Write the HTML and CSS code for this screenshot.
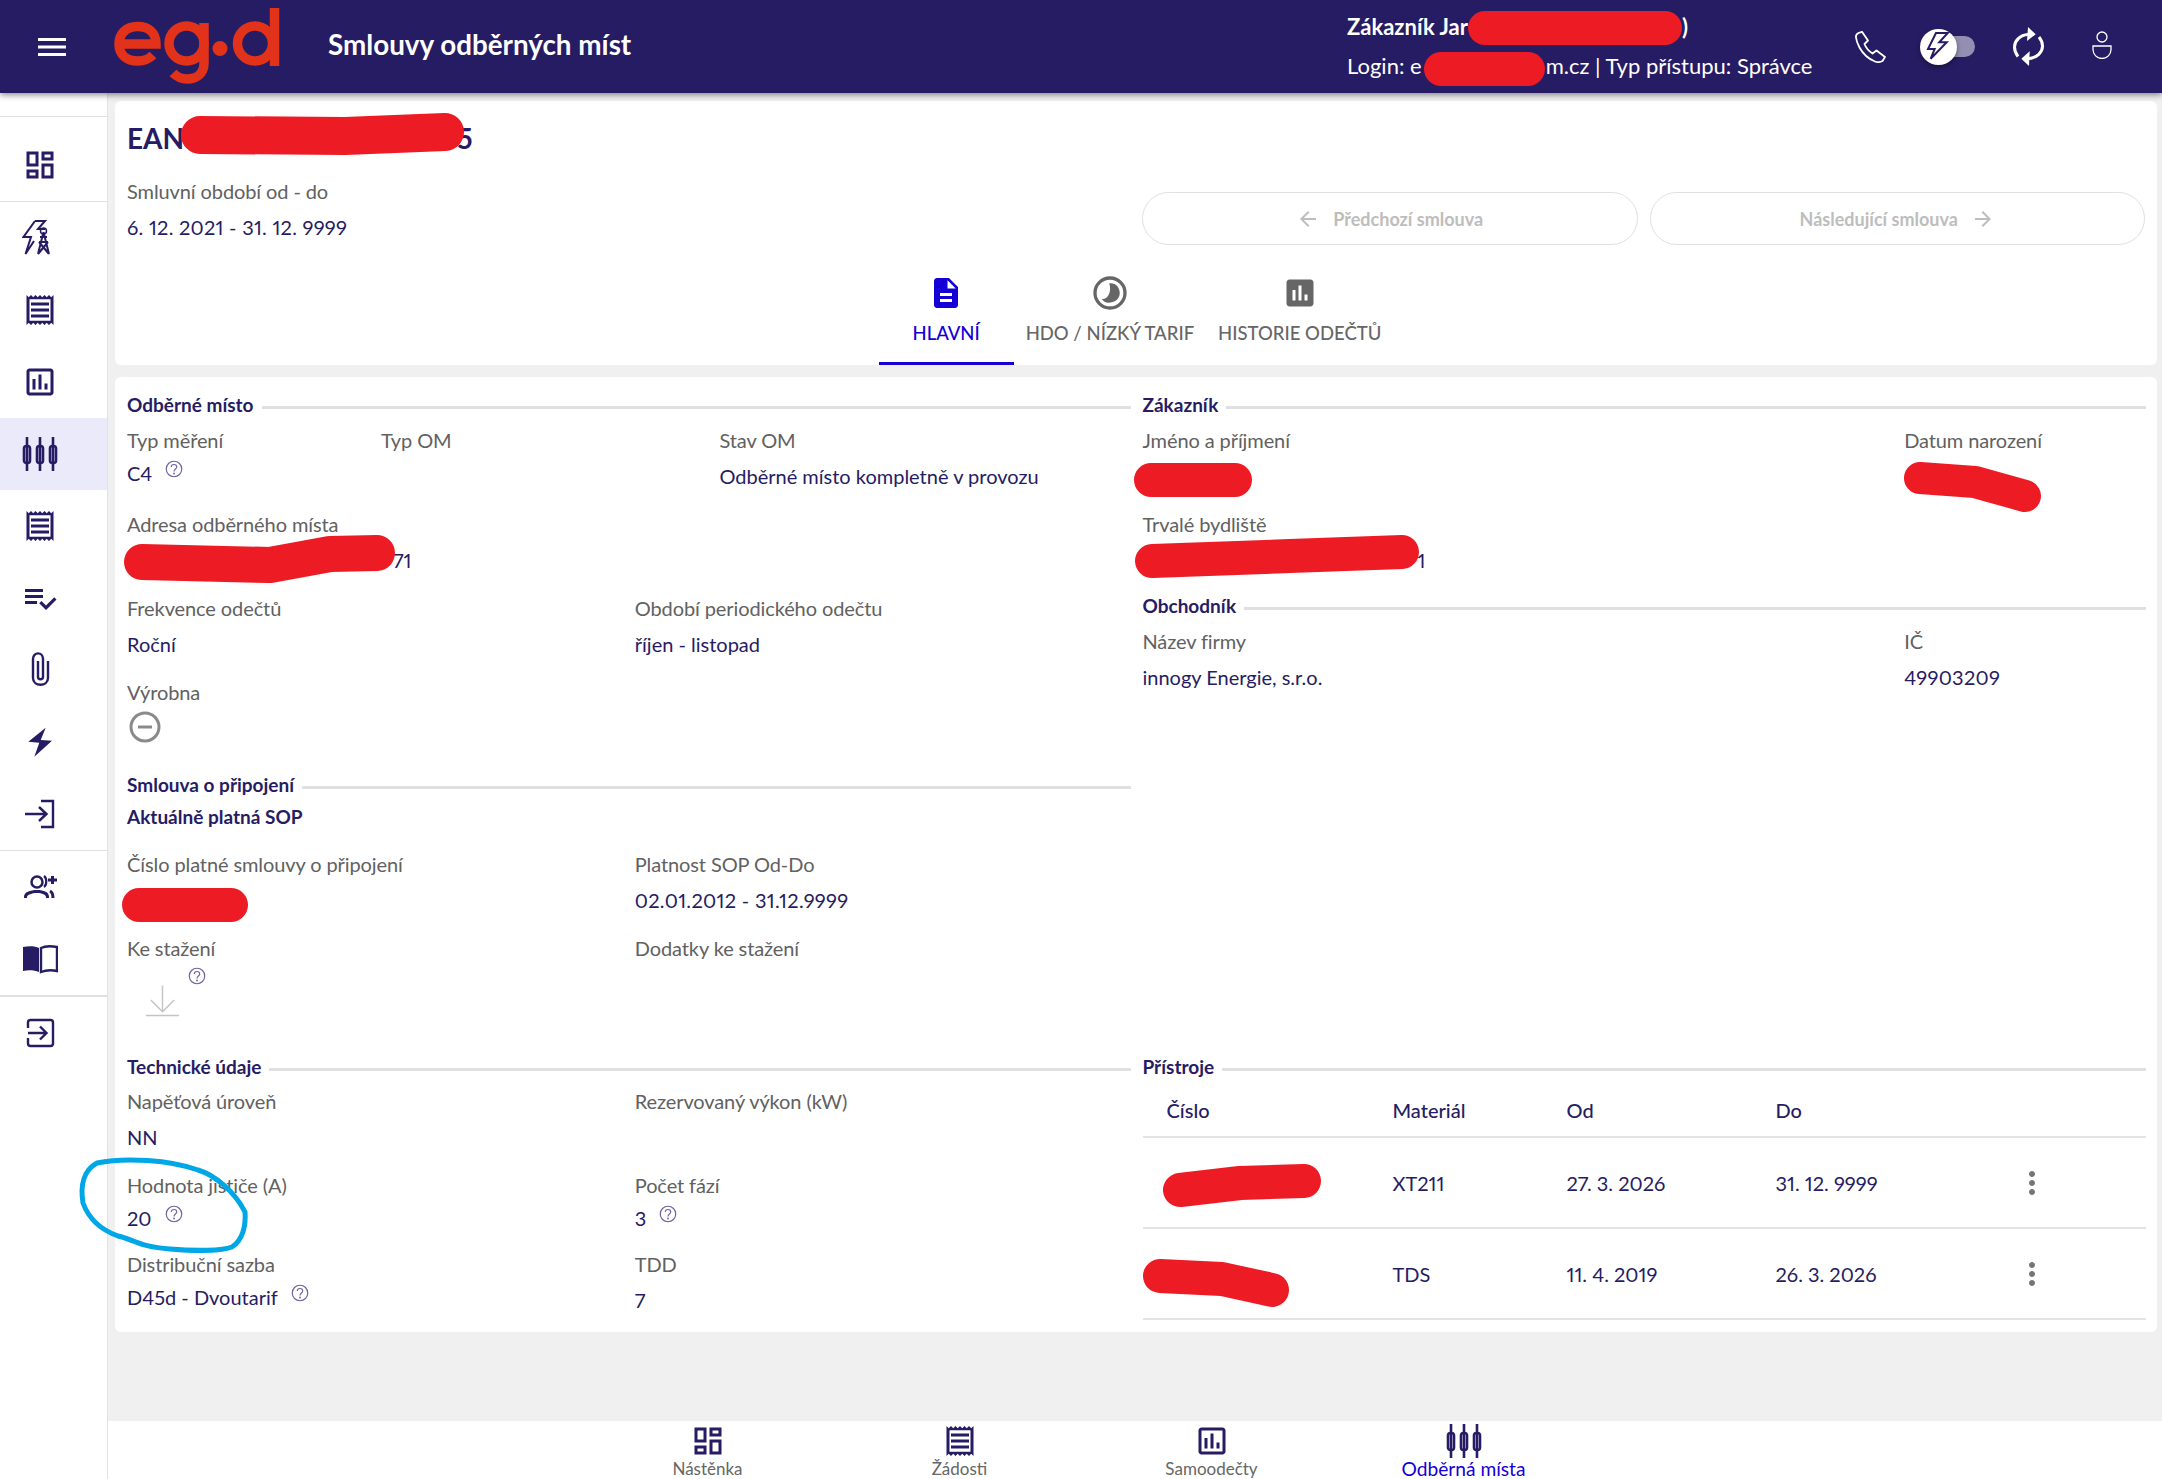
FILE: index.html
```html
<!DOCTYPE html>
<html lang="cs">
<head>
<meta charset="utf-8">
<title>Smlouvy odběrných míst</title>
<link rel="stylesheet" href="styles.css">
</head>
<body>
<svg class="defs" aria-hidden="true">
  <symbol id="i-dash" viewBox="0 0 24 24"><path d="M19 5v2h-4V5h4M9 5v6H5V5h4m10 8v6h-4v-6h4M9 17v2H5v-2h4M21 3h-8v6h8V3zM11 3H3v10h8V3zm10 8h-8v10h8V11zm-10 4H3v6h8v-6z"/></symbol>
  <symbol id="i-receipt" viewBox="0 0 24 24"><path d="M19.5 3.5L18 2l-1.5 1.5L15 2l-1.5 1.5L12 2l-1.5 1.5L9 2 7.5 3.5 6 2 4.5 3.5 3 2v20l1.5-1.5L6 22l1.5-1.5L9 22l1.5-1.5L12 22l1.5-1.5L15 22l1.5-1.5L18 22l1.5-1.5L21 22V2l-1.5 1.5zM19 19.09H5V4.91h14v14.18zM6 15h12v2H6zm0-4h12v2H6zm0-4h12v2H6z"/></symbol>
  <symbol id="i-chart" viewBox="0 0 24 24"><path d="M19 3H5c-1.1 0-2 .9-2 2v14c0 1.1.9 2 2 2h14c1.1 0 2-.9 2-2V5c0-1.1-.9-2-2-2zm0 16H5V5h14v14zM7 10h2v7H7zm4-3h2v10h-2zm4 6h2v4h-2z"/></symbol>
  <symbol id="i-meters" viewBox="0 0 36 36"><g fill="none" stroke="currentColor" stroke-width="2.6"><path d="M5 1v34M18 1v34M31 1v34"/><rect x="2" y="10" width="6" height="17" rx="2.500"/><rect x="15" y="10" width="6" height="17" rx="2.500"/><rect x="28" y="10" width="6" height="17" rx="2.500"/></g></symbol>
  <symbol id="i-help" viewBox="0 0 20 20"><g fill="none" stroke="currentColor" stroke-width="1.3"><circle cx="10" cy="10" r="8.6"/><path d="M7 7.8C7 6 8.4 5 10 5s3 1 3 2.7c0 2.3-3 2.3-3 5"/></g><circle cx="10" cy="15" r="1" fill="currentColor"/></symbol>
  <symbol id="i-kebab" viewBox="0 0 24 24"><path d="M12 8c1.1 0 2-.9 2-2s-.9-2-2-2-2 .9-2 2 .9 2 2 2zm0 2c-1.1 0-2 .9-2 2s.9 2 2 2 2-.9 2-2-.9-2-2-2zm0 6c-1.1 0-2 .9-2 2s.9 2 2 2 2-.9 2-2-.9-2-2-2z"/></symbol>
</svg>

<div class="app">
  <header class="topbar">
    <svg class="burger" viewBox="0 0 28 18"><path d="M0 1.5h28M0 9h28M0 16.5h28"/></svg>
    <svg class="logo" viewBox="0 0 166 76" role="img" aria-label="eg.d">
      <g fill="none" stroke="#e2321a" stroke-width="9.5">
        <path d="M5 36H42C42 24 34 18.500 23.500 18.500C12 18.500 5 26 5 36C5 47 13 53 24 53C30 53 35 51 39 47"/>
        <circle cx="72.500" cy="35.500" r="17.500"/>
        <path d="M90 15V55C90 66 82 71 73 71C67 71 63 69 59 65"/>
        <circle cx="141" cy="35.500" r="17.500"/>
        <path d="M160.500 0V58"/>
      </g>
      <circle cx="106" cy="40.500" r="7.500" fill="#e2321a"/>
    </svg>
    <h1 class="page-title">Smlouvy odběrných míst</h1>
    <div class="user-info">
      <div class="user-name">Zákazník Jar<span class="gap gap-name"></span>)</div>
      <div class="user-login">Login: e<span class="gap gap-login"></span>m.cz | Typ přístupu: Správce</div>
    </div>
    <div class="top-icons">
      <svg class="top-phone" viewBox="0 0 32 32"><path d="M2 6.500Q1.500 3.500 4.500 2L8 .8 14 9.500 10.500 13Q12.500 18.500 18.500 22.500L22.500 19.500 31 26 28.500 30Q25 32 21 30.500Q11 26.500 5.500 16.500Q2.500 11 2 6.500z"/></svg>
      <div class="toggle">
        <span class="toggle-track"></span>
        <span class="toggle-knob"><svg viewBox="0 0 37 36"><path d="M16 4L8 20H14.700L10.700 29.700 26.700 13.300H19.300L27.700 4z"/></svg></span>
      </div>
      <svg class="top-sync" viewBox="0 0 31 39">
        <path class="sync-line" d="M15 7.500C7 8 1.500 14 1.500 20C1.500 24 3 27 5 29.500"/>
        <path d="M15 0L22.700 7.300 14 14z"/>
        <path class="sync-line" d="M16 31.500C24 31 29.500 25 29.500 19C29.500 15.500 28 12.500 26 10"/>
        <path d="M16.700 24.300L8.300 31.700 16 39z"/>
      </svg>
      <svg class="top-user" viewBox="0 0 20 28"><circle cx="10" cy="6" r="5"/><path d="M1 15H19V18.500a9 9 0 0 1-18 0z"/></svg>
    </div>
  </header>

  <div class="body">
    <nav class="sidebar">
      <div class="side-group side-group-first">
        <a class="side-item side-item-dash"><svg class="ico"><use href="#i-dash"/></svg></a>
      </div>
      <div class="side-group">
        <a class="side-item">
          <svg class="ico ico-line ico-tower" viewBox="0 0 36 36"><path d="M13 1H23L16 9h7M13 1L1.500 17H9L3.500 34 12 21"/><path d="M21.500 12L16 34M21.500 12L27 34M17 22H26M16 34L26 22M27 34L17 22M18 17H25"/><circle cx="21.500" cy="11" r="3"/></svg>
        </a>
        <a class="side-item"><svg class="ico"><use href="#i-receipt"/></svg></a>
        <a class="side-item"><svg class="ico"><use href="#i-chart"/></svg></a>
        <a class="side-item side-item-active"><svg class="ico"><use href="#i-meters"/></svg></a>
        <a class="side-item"><svg class="ico"><use href="#i-receipt"/></svg></a>
        <a class="side-item"><svg class="ico" viewBox="0 0 24 24"><path d="M14 10H2v2h12v-2zm0-4H2v2h12V6zM2 16h8v-2H2v2zm19.500-4.500L23 13l-6.990 7-4.510-4.500L13 14l3.010 3 5.490-5.500z"/></svg></a>
        <a class="side-item"><svg class="ico ico-line" viewBox="0 0 36 36"><path d="M26 9V26C26 35 11 35 11 26V7C11 -.5 21 -.5 21 7V25C21 28 16 28 16 25V9"/></svg></a>
        <a class="side-item"><svg class="ico-bolt" viewBox="0 0 24 30"><path d="M17.700.7L.3 14.700 11.300 15.700 6.300 29.700 24 13.700 12.700 13z"/></svg></a>
        <a class="side-item"><svg class="ico ico-line" viewBox="0 0 36 36"><path d="M3 18H24M17 11L24.500 18 17 25M19 5H31V31H19"/></svg></a>
      </div>
      <div class="side-group">
        <a class="side-item"><svg class="ico" viewBox="0 0 36 36"><circle cx="15" cy="13" r="5.500" fill="none" stroke="currentColor" stroke-width="2.500"/><path d="M2 29v-1c0-5 6-7 13-7s12 2 12 7v1h-3v-1c0-2-4-4-9-4s-10 2-10 4v1z"/><path d="M22 7c3 2 3 9 0 11" fill="none" stroke="currentColor" stroke-width="2.200"/><path d="M28 22c2 1 3 3 3 7" fill="none" stroke="currentColor" stroke-width="3"/><path d="M29 15v-2.500h-3v-3h3V7h3v2.500h3v3h-3V15z"/></svg></a>
        <a class="side-item"><svg class="ico" viewBox="0 0 36 36"><path d="M1 6c6-1 12-1 16 1v24c-5-2-11-2-16-1z"/><path d="M19 7c4-2 10-2 16-1v24c-5-1-11-1-16 1z" fill="none" stroke="currentColor" stroke-width="2.400"/></svg></a>
      </div>
      <div class="side-group side-group-last">
        <a class="side-item"><svg class="ico ico-line" viewBox="0 0 36 36"><path d="M6 13V7.500Q6 5 8.500 5H28.500Q31 5 31 7.500V28.500Q31 31 28.500 31H8.500Q6 31 6 28.500V23M6 18H24M18 11.500L24.500 18 18 24.500"/></svg></a>
      </div>
    </nav>

    <main class="main">
      <section class="card head-card">
        <div class="head-top">
          <div>
            <h2 class="ean">EAN<span class="gap gap-ean"></span>5</h2>
            <div class="label head-label">Smluvní období od - do</div>
            <div class="value head-value">6. 12. 2021 - 31. 12. 9999</div>
          </div>
          <div class="pager">
            <button class="pager-btn"><svg viewBox="0 0 24 24"><path d="M20 11H7.830l5.590-5.590L12 4l-8 8 8 8 1.410-1.410L7.830 13H20v-2z"/></svg>Předchozí smlouva</button>
            <button class="pager-btn">Následující smlouva<svg viewBox="0 0 24 24"><path d="M12 4l-1.410 1.410L16.170 11H4v2h12.170l-5.580 5.590L12 20l8-8z"/></svg></button>
          </div>
        </div>
        <div class="tabs">
          <a class="tab tab-active">
            <svg viewBox="0 0 24 24"><path d="M14 2H6c-1.100 0-1.990.9-1.990 2L4 20c0 1.100.89 2 1.990 2H18c1.100 0 2-.9 2-2V8l-6-6zm2 16H8v-2h8v2zm0-4H8v-2h8v2zm-3-5V3.500L18.500 9H13z"/></svg>
            <span>HLAVNÍ</span>
          </a>
          <a class="tab">
            <svg viewBox="0 0 24 24"><circle cx="12" cy="12" r="10" fill="none" stroke="currentColor" stroke-width="2.200"/><path d="M11.500 5.500C16 5 18.500 8.500 18.500 12C18.500 16 15 18.500 11 18.500C9 18.500 7.500 17.500 6.500 16C10 16.500 13.500 12 11.500 5.500z"/></svg>
            <span>HDO / NÍZKÝ TARIF</span>
          </a>
          <a class="tab">
            <svg viewBox="0 0 24 24"><path d="M19 3H5c-1.100 0-2 .9-2 2v14c0 1.100.9 2 2 2h14c1.100 0 2-.9 2-2V5c0-1.100-.9-2-2-2zM9 17H7v-7h2v7zm4 0h-2V7h2v10zm4 0h-2v-4h2v4z"/></svg>
            <span>HISTORIE ODEČTŮ</span>
          </a>
        </div>
      </section>

      <section class="card detail-card">
        <div class="col col-top">
          <div class="sec-head"><h3>Odběrné místo</h3></div>
          <div class="row row-first">
            <div class="c3"><div class="label">Typ měření</div><div class="value value-tight">C4<svg class="help"><use href="#i-help"/></svg></div></div>
            <div class="c4"><div class="label">Typ OM</div></div>
            <div class="c5"><div class="label">Stav OM</div><div class="value">Odběrné místo kompletně v provozu</div></div>
          </div>
          <div class="row"><div class="c12"><div class="label">Adresa odběrného místa</div><div class="value"><span class="gap gap-addr"></span>71</div></div></div>
          <div class="row">
            <div class="c6"><div class="label">Frekvence odečtů</div><div class="value">Roční</div></div>
            <div class="c6"><div class="label">Období periodického odečtu</div><div class="value">říjen - listopad</div></div>
          </div>
          <div class="row row-92">
            <div class="c12"><div class="label">Výrobna</div>
              <svg class="minus" viewBox="0 0 32 32"><circle cx="16" cy="16" r="14"/><path d="M9 16H23"/></svg>
            </div>
          </div>
          <div class="sec-head"><h3>Smlouva o připojení</h3></div>
          <div class="sop-title">Aktuálně platná SOP</div>
          <div class="row row-sop">
            <div class="c6"><div class="label">Číslo platné smlouvy o připojení</div></div>
            <div class="c6"><div class="label">Platnost SOP Od-Do</div><div class="value value-num">02.01.2012 - 31.12.9999</div></div>
          </div>
          <div class="row row-118">
            <div class="c6"><div class="label">Ke stažení</div>
              <div class="download">
                <svg class="dl-icon" viewBox="0 0 36 32"><path d="M18 0V27M6 15L18 27 30 15M1 31H35"/></svg>
                <svg class="help help-over"><use href="#i-help"/></svg>
              </div>
            </div>
            <div class="c6"><div class="label">Dodatky ke stažení</div></div>
          </div>
        </div>

        <div class="col col-top">
          <div class="sec-head"><h3>Zákazník</h3></div>
          <div class="row row-first">
            <div class="c9"><div class="label">Jméno a příjmení</div></div>
            <div class="c3"><div class="label">Datum narození</div></div>
          </div>
          <div class="row row-81"><div class="c12"><div class="label">Trvalé bydliště</div><div class="value"><span class="gap gap-home"></span>1</div></div></div>
          <div class="sec-head"><h3>Obchodník</h3></div>
          <div class="row row-first">
            <div class="c9"><div class="label">Název firmy</div><div class="value">innogy Energie, s.r.o.</div></div>
            <div class="c3"><div class="label">IČ</div><div class="value value-num">49903209</div></div>
          </div>
        </div>

        <div class="col">
          <div class="sec-head"><h3>Technické údaje</h3></div>
          <div class="row row-tech">
            <div class="c6"><div class="label">Napěťová úroveň</div><div class="value">NN</div></div>
            <div class="c6"><div class="label">Rezervovaný výkon (kW)</div></div>
          </div>
          <div class="row row-79">
            <div class="c6"><div class="label">Hodnota jističe (A)</div><div class="value value-tight">20<svg class="help"><use href="#i-help"/></svg></div></div>
            <div class="c6"><div class="label">Počet fází</div><div class="value value-tight">3<svg class="help"><use href="#i-help"/></svg></div></div>
          </div>
          <div class="row row-79">
            <div class="c6"><div class="label">Distribuční sazba</div><div class="value value-tight">D45d - Dvoutarif<svg class="help"><use href="#i-help"/></svg></div></div>
            <div class="c6"><div class="label">TDD</div><div class="value">7</div></div>
          </div>
        </div>

        <div class="col">
          <div class="sec-head"><h3>Přístroje</h3></div>
          <div class="dev-table">
            <div class="dev-row dev-head"><span>Číslo</span><span>Materiál</span><span>Od</span><span>Do</span><span></span></div>
            <div class="dev-row"><span></span><span>XT211</span><span>27. 3. 2026</span><span>31. 12. 9999</span><svg class="kebab"><use href="#i-kebab"/></svg></div>
            <div class="dev-row"><span></span><span>TDS</span><span>11. 4. 2019</span><span>26. 3. 2026</span><svg class="kebab"><use href="#i-kebab"/></svg></div>
          </div>
        </div>
      </section>

      <nav class="bottom-nav">
        <a class="bn-item"><svg class="ico"><use href="#i-dash"/></svg><span>Nástěnka</span></a>
        <a class="bn-item"><svg class="ico"><use href="#i-receipt"/></svg><span>Žádosti</span></a>
        <a class="bn-item"><svg class="ico"><use href="#i-chart"/></svg><span>Samoodečty</span></a>
        <a class="bn-item bn-active"><svg class="ico"><use href="#i-meters"/></svg><span>Odběrná místa</span></a>
      </nav>
    </main>
  </div>

  <svg class="marks" viewBox="0 0 2162 1479" aria-hidden="true">
    <g class="mark-red">
      <path class="w34" d="M1485 28L1665 28"/>
      <path class="w34" d="M1441 69L1528 69"/>
      <path class="w38" d="M200 135L345 136L445 132"/>
      <path class="w36" d="M142 562L270 565L330 554L377 553"/>
      <path class="w34" d="M139 905H231"/>
      <path class="w34" d="M1151 480H1235"/>
      <path class="w32" d="M1920 478L1975 482L2025 496"/>
      <path class="w34" d="M1152 561L1290 556L1402 552"/>
      <path class="w34" d="M1180 1190L1240 1183L1304 1181"/>
      <path class="w34" d="M1160 1276L1222 1279L1272 1290"/>
    </g>
    <path class="mark-blue" d="M97 1163C84 1170 80 1185 83 1203C90 1222 104 1231 118 1236C135 1240 140 1247 170 1249C195 1251 222 1251 232 1247C243 1240 246 1225 245 1212C235 1192 215 1175 198 1170C170 1160 125 1157 97 1163z"/>
  </svg>
</div>
</body>
</html>
```

FILE: styles.css
```css
* { box-sizing: border-box; }
html, body { margin: 0; padding: 0; }
body {
  font-family: "Lato", "Noto Sans", sans-serif;
  font-size: 20px;
  color: #261c63;
  background: #f0f0f0;
  font-variant-numeric: proportional-nums;
}
h1, h2, h3 { margin: 0; }
.defs { position: absolute; width: 0; height: 0; }

.app {
  position: relative;
  width: 2162px;
  height: 1479px;
  overflow: hidden;
  display: flex;
  flex-direction: column;
}

/* top bar */
.topbar {
  position: relative;
  z-index: 2;
  height: 93px;
  flex: none;
  display: flex;
  align-items: center;
  background: #261c63;
  color: #fff;
  box-shadow: 0 2px 6px rgba(0, 0, 0, .45);
  padding-left: 38px;
}
.burger { width: 28px; height: 18px; fill: none; stroke: #fff; stroke-width: 3; flex: none; }
.logo { width: 166px; height: 76px; margin-left: 48px; flex: none; align-self: flex-start; margin-top: 8px; }
.page-title { font-size: 27.800px; line-height: 32px; font-weight: 700; margin: 0 0 3px 48px; width: 1019px; white-space: nowrap; }
.user-info { width: 507px; flex: none; font-size: 22px; }
.user-name { font-size: 22px; font-weight: 700; line-height: 28px; margin-bottom: 11px; white-space: nowrap; }
.user-login { line-height: 28px; white-space: nowrap; }
.gap { display: inline-block; height: 1px; }
.gap-name { width: 214px; }
.gap-login { width: 124px; }
.gap-ean { width: 273px; }
.gap-addr { width: 266px; }
.gap-home { width: 275px; }
.top-icons { display: flex; align-items: center; flex: none; }
.top-phone { width: 32px; height: 32px; fill: none; stroke: #fff; stroke-width: 1.800; stroke-linejoin: round; }
.toggle { position: relative; width: 56px; height: 36px; margin-left: 34px; }
.toggle-track { position: absolute; left: 16px; top: 7px; width: 39px; height: 21px; border-radius: 11px; background: #948fb2; }
.toggle-knob {
  position: absolute; left: 0; top: 0; width: 37px; height: 36px; border-radius: 50%;
  background: #fff; box-shadow: 0 2px 5px rgba(0, 0, 0, .4);
}
.toggle-knob svg { display: block; width: 37px; height: 36px; fill: none; stroke: #261c63; stroke-width: 2; }
.top-sync { width: 31px; height: 39px; fill: #fff; margin-left: 37px; }
.sync-line { fill: none; stroke: #fff; stroke-width: 3; }
.top-user { width: 20px; height: 28px; fill: none; stroke: #fff; stroke-width: 1.300; margin-left: 48px; margin-top: -3px; }

/* layout */
.body { flex: 1; display: flex; min-height: 0; }
.sidebar {
  width: 108px; flex: none; background: #fff;
  border-right: 1px solid #e2e2e2;
  padding-top: 23px;
  display: flex; flex-direction: column;
}
.side-group { border-top: 1px solid #e0e0e0; }
.side-group-last { border-top-width: 2px; }
.side-item { height: 72px; display: flex; align-items: center; justify-content: center; padding-right: 28px; color: #261c63; }
.side-item-dash { height: 84px; padding-top: 12px; }
.side-item-active { background: #eaeafa; }
.ico { width: 36px; height: 36px; fill: currentColor; flex: none; }
.ico-line { fill: none; stroke: currentColor; stroke-width: 2.400; }
.ico-tower { stroke-width: 2; }
.ico-line circle { stroke-width: 1.500; }
.ico-bolt { width: 24px; height: 30px; fill: #261c63; }

.main { flex: 1; min-width: 0; display: flex; flex-direction: column; padding-top: 8px; }
.card { background: #fff; border-radius: 6px; margin: 0 5px 0 7px; }

/* head card */
.head-card { height: 264px; padding: 20px 12px 0; display: flex; flex-direction: column; flex: none; }
.head-top { display: grid; grid-template-columns: 1fr 1fr; column-gap: 12px; }
.ean { font-size: 28px; line-height: 34px; font-weight: 700; margin-bottom: 26px; }
.label { color: #616161; font-size: 20px; line-height: 22px; margin-bottom: 2px; letter-spacing: -.1px; white-space: nowrap; }
.value { font-size: 20px; line-height: 22px; margin-top: 14px; color: #261c63; white-space: nowrap; }
.value-tight { line-height: 24px; margin-top: 10px; display: flex; align-items: flex-start; }
.value-num { letter-spacing: .3px; }
.head-label { line-height: 20px; margin-bottom: 4px; }
.head-value { margin-top: 14px; line-height: 24px; letter-spacing: .25px; }
.pager { display: flex; gap: 12px; padding-top: 71px; align-items: flex-start; }
.pager-btn {
  flex: 1; height: 53px; border: 1px solid #e0e0e0; border-radius: 27px; background: #fff;
  color: #bdbdbd; font: 700 18px "Lato", sans-serif;
  display: flex; align-items: center; justify-content: center; gap: 13px;
}
.pager-btn svg { width: 24px; height: 24px; fill: #bdbdbd; }

.tabs { margin-top: auto; display: flex; justify-content: center; }
.tab {
  height: 87px; padding: 0 12px; min-width: 135px; color: #666;
  display: flex; flex-direction: column; align-items: center;
  border-bottom: 3px solid transparent;
  font-size: 18.500px; font-weight: 500; white-space: nowrap;
}
.tab svg { width: 36px; height: 36px; fill: currentColor; margin-top: -3px; }
.tab span { line-height: 24px; margin-top: 10px; }
.tab-active { color: #1400d6; border-bottom-color: #1400d6; }

/* detail card */
.detail-card {
  flex: none; margin-top: 12px; padding: 16px 11px 0 12px; height: 955px;
  display: grid; grid-template-columns: 1fr 1fr; grid-template-rows: 662px 1fr; column-gap: 12px;
}
.col { min-width: 0; }
.sec-head { display: flex; align-items: center; height: 24px; gap: 8px; }
.sec-head h3 { font-size: 19px; font-weight: 700; line-height: 24px; white-space: nowrap; color: #261c63; }
.sec-head::after { content: ""; flex: 1; height: 3px; background: #e0e0e0; margin-top: 5px; }

.row { display: grid; grid-template-columns: repeat(12, 1fr); column-gap: 12px; height: 84px; }
.row-first { margin-top: 12px; }
.row-92 { height: 92px; }
.row-118 { height: 118px; }
.row-81 { height: 81px; }
.row-79 { height: 79px; }
.row-tech { margin-top: 11px; height: 84px; }
.row-sop { margin-top: 24px; }
.c3 { grid-column: span 3; }
.c4 { grid-column: span 4; }
.c5 { grid-column: span 5; }
.c6 { grid-column: span 6; }
.c9 { grid-column: span 9; }
.c12 { grid-column: span 12; }
.sop-title { margin-top: 8px; line-height: 24px; font-size: 19px; font-weight: 700; }

.help { width: 18px; height: 18px; color: #6d64a0; margin-left: 13px; flex: none; margin-top: -1px; }
.minus { display: block; width: 32px; height: 32px; margin: 8px 0 0 2px; fill: none; stroke: #8a8a8a; stroke-width: 3; }
.download { position: relative; height: 60px; }
.dl-icon { position: absolute; left: 18px; top: 24px; width: 35px; height: 32px; fill: none; stroke: #c4c4c4; stroke-width: 1.500; }
.help-over { position: absolute; left: 61px; top: 6px; margin: 0; }

.dev-table { margin-top: 4px; }
.dev-row {
  display: grid; grid-template-columns: 226px 174px 209px 238px 36px;
  align-items: center; padding-left: 24px; height: 91px;
  border-bottom: 2px solid #e4e4e4; font-size: 20px;
}
.dev-head { height: 55px; font-weight: 500; }
.kebab { width: 36px; height: 36px; fill: #757575; }

/* bottom nav */
.bottom-nav {
  margin-top: auto; height: 58px; background: #fff; flex: none;
  display: flex; justify-content: center; padding-right: 99px;
}
.bn-item { width: 252px; display: flex; flex-direction: column; align-items: center; color: #261c63; }
.bn-item .ico { margin-top: 2px; }
.bn-item span { font-size: 17px; line-height: 20px; color: #666; }
.bn-active span { font-size: 19.200px; color: #1400d6; }

/* hand-drawn overlays */
.marks { position: absolute; left: 0; top: 0; width: 2162px; height: 1479px; pointer-events: none; z-index: 3; }
.mark-red path { fill: none; stroke: #ed1c24; stroke-linecap: round; stroke-linejoin: round; }
.w32 { stroke-width: 32; }
.w34 { stroke-width: 34; }
.w36 { stroke-width: 36; }
.w38 { stroke-width: 38; }
.mark-blue { fill: none; stroke: #00a7e6; stroke-width: 5; stroke-linecap: round; }
```
